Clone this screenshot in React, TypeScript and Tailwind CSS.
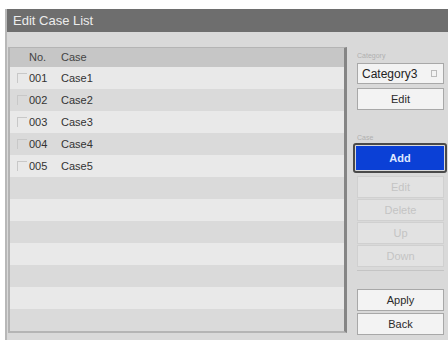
const rows = [
  { no: "001", name: "Case1" },
  { no: "002", name: "Case2" },
  { no: "003", name: "Case3" },
  { no: "004", name: "Case4" },
  { no: "005", name: "Case5" },
]

const font = { fontFamily: '"Liberation Sans", Arial, sans-serif' }

function Btn({ label, disabled }: { label: string; disabled?: boolean }) {
  return (
    <div
      className={
        disabled
          ? "flex h-[22px] items-center justify-center border border-[#d0d0d0] bg-[#e2e2e2] text-[11px] text-[#c4c4c4]"
          : "flex h-[22px] items-center justify-center border border-[#a8a8a8] bg-[#f3f3f3] text-[11px] text-[#2a2a2a]"
      }
    >
      {label}
    </div>
  )
}

export default function App() {
  const empty = Array.from({ length: 7 }, (_, i) => i)
  return (
    <div className="h-[340px] w-[448px] overflow-hidden bg-white pl-[5px] pt-[9px]" style={font}>
      <div className="flex h-[331px] flex-col border-l-2 border-[#b8b8b8] bg-[#d9d9d9]">
        <div className="flex h-[23px] items-center bg-[#6e6e6e] pl-[6px] text-[13px] text-[#ececec]">
          Edit Case List
        </div>
        <div className="flex pl-[1px] pt-[15px]">
          <div className="flex h-[286px] w-[339px] flex-col overflow-hidden border-b-2 border-l-2 border-r-[3px] border-t border-[#b4b4b4] border-r-[#858585] bg-[#e4e4e4]">
            <div className="flex h-[19px] items-center bg-[#c6c6c6] text-[11px] text-[#444]">
              <span className="ml-[19px] w-[32px]">No.</span>
              <span>Case</span>
            </div>
            {rows.map((r, i) => (
              <div
                key={r.no}
                className={
                  "flex h-[22px] shrink-0 items-center text-[11px] text-[#333] " +
                  (i % 2 === 0 ? "bg-[#e9e9e9]" : "bg-[#dadada]")
                }
              >
                <span className="ml-[7px] mr-[2px] h-[10px] w-[10px] border-l border-t border-[#c8c8c8]" />
                <span className="w-[32px]">{r.no}</span>
                <span>{r.name}</span>
              </div>
            ))}
            {empty.map((i) => (
              <div
                key={i}
                className={
                  "h-[22px] shrink-0 " + ((i + 5) % 2 === 0 ? "bg-[#e9e9e9]" : "bg-[#dadada]")
                }
              />
            ))}
          </div>
          <div className="ml-[10px] flex w-[87px] flex-col">
            <div className="h-[16px] pt-[5px] text-[7px] leading-none text-[#b0b0b0]">Category</div>
            <div className="flex h-[21px] items-center justify-between border border-[#a8a8a8] bg-[#f3f3f3] pl-[4px] pr-[6px] text-[12px] text-[#222]">
              <span>Category3</span>
              <span className="h-[7px] w-[6px] border border-[#bbb]" />
            </div>
            <div className="mt-[4px]">
              <Btn label="Edit" />
            </div>
            <div className="mt-[24px] h-[9px] text-[7px] leading-none text-[#b0b0b0]">Case</div>
            <div className="-ml-[4px] -mr-[3px] rounded-[3px] border-2 border-[#4a4a4a] p-[1px]">
              <div className="flex h-[24px] items-center justify-center bg-[#0b40d6] text-[11px] font-bold text-[#dfe7ff]">
                Add
              </div>
            </div>
            <div className="mt-[3px] flex flex-col gap-[1px]">
              <Btn label="Edit" disabled />
              <Btn label="Delete" disabled />
              <Btn label="Up" disabled />
              <Btn label="Down" disabled />
            </div>
            <div className="mt-[3px] h-px bg-[#c4c4c4]" />
            <div className="mt-[18px] flex flex-col gap-[2px]">
              <Btn label="Apply" />
              <Btn label="Back" />
            </div>
          </div>
        </div>
      </div>
    </div>
  )
}
